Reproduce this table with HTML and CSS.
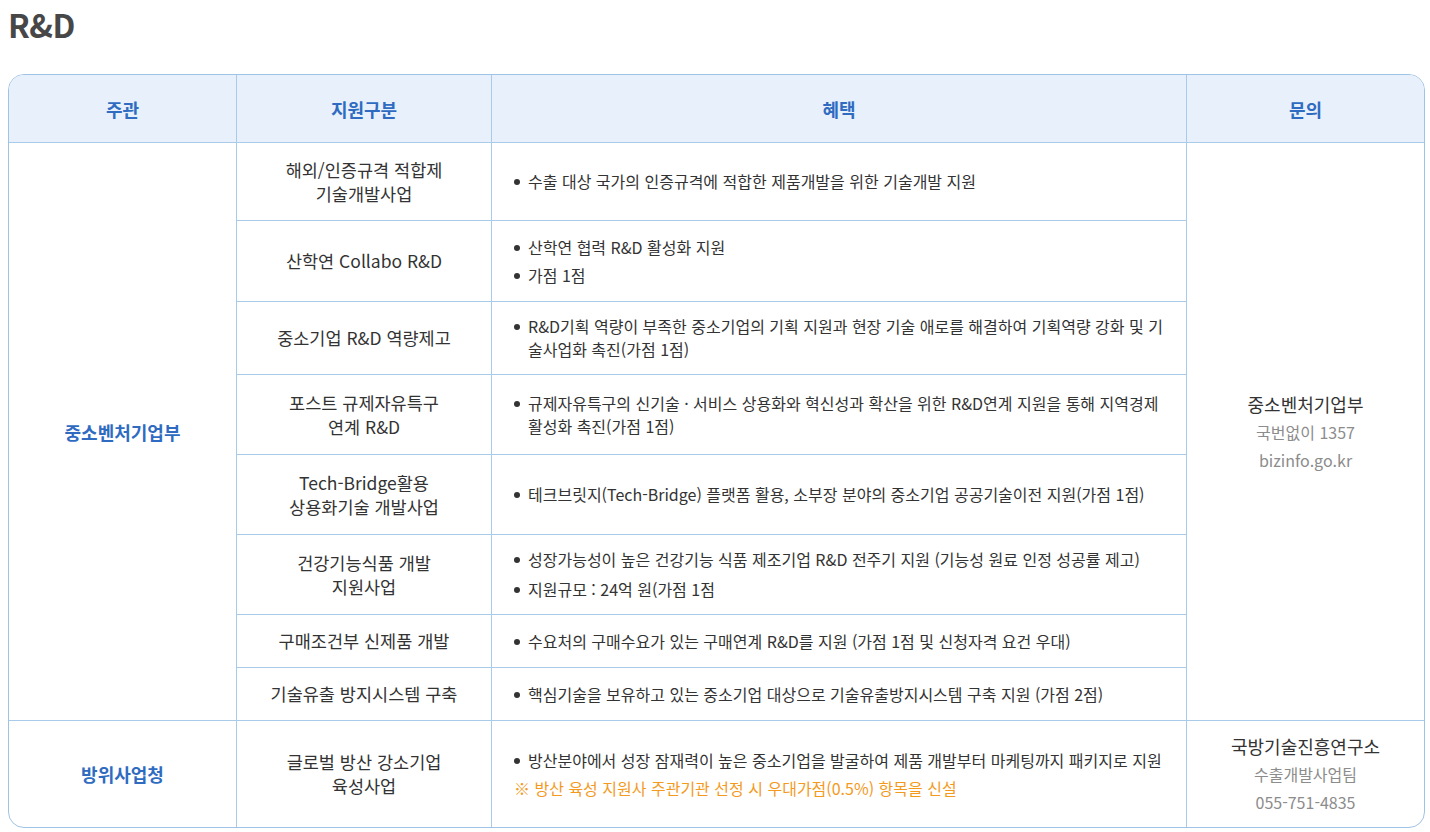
FILE: index.html
```html
<!DOCTYPE html>
<html lang="ko">
<head>
<meta charset="utf-8">
<title>R&amp;D</title>
<link rel="stylesheet" href="styles.css">
</head>
<body>
<h2 class="title">R&amp;D</h2>
<div class="table-wrap">
<table class="rd-table">
<colgroup>
<col class="c1"><col class="c2"><col class="c3"><col class="c4">
</colgroup>
<thead>
<tr class="h-head">
<th>주관</th><th>지원구분</th><th>혜택</th><th>문의</th>
</tr>
</thead>
<tbody>
<tr class="h78">
<td class="org" rowspan="8">중소벤처기업부</td>
<td class="kind">해외/인증규격 적합제<br>기술개발사업</td>
<td class="benefit"><ul><li>수출 대상 국가의 인증규격에 적합한 제품개발을 위한 기술개발 지원</li></ul></td>
<td class="contact" rowspan="8"><p class="c-name">중소벤처기업부</p><p class="c-sub">국번없이 1357</p><p class="c-sub">bizinfo.go.kr</p></td>
</tr>
<tr class="h81">
<td class="kind">산학연 Collabo R&amp;D</td>
<td class="benefit"><ul class="gap"><li>산학연 협력 R&amp;D 활성화 지원</li><li>가점 1점</li></ul></td>
</tr>
<tr class="h73">
<td class="kind">중소기업 R&amp;D 역량제고</td>
<td class="benefit"><ul><li>R&amp;D기획 역량이 부족한 중소기업의 기획 지원과 현장 기술 애로를 해결하여 기획역량 강화 및 기술사업화 촉진(가점 1점)</li></ul></td>
</tr>
<tr class="h80">
<td class="kind">포스트 규제자유특구<br>연계 R&amp;D</td>
<td class="benefit"><ul><li>규제자유특구의 신기술 · 서비스 상용화와 혁신성과 확산을 위한 R&amp;D연계 지원을 통해 지역경제 활성화 촉진(가점 1점)</li></ul></td>
</tr>
<tr class="h80">
<td class="kind">Tech-Bridge활용<br>상용화기술 개발사업</td>
<td class="benefit"><ul><li>테크브릿지(Tech-Bridge) 플랫폼 활용, 소부장 분야의 중소기업 공공기술이전 지원(가점 1점)</li></ul></td>
</tr>
<tr class="h80">
<td class="kind">건강기능식품 개발<br>지원사업</td>
<td class="benefit"><ul class="gap gap-lg"><li>성장가능성이 높은 건강기능 식품 제조기업 R&amp;D 전주기 지원 (기능성 원료 인정 성공률 제고)</li><li>지원규모 : 24억 원(가점 1점</li></ul></td>
</tr>
<tr class="h53">
<td class="kind">구매조건부 신제품 개발</td>
<td class="benefit"><ul><li>수요처의 구매수요가 있는 구매연계 R&amp;D를 지원 (가점 1점 및 신청자격 요건 우대)</li></ul></td>
</tr>
<tr class="h53">
<td class="kind">기술유출 방지시스템 구축</td>
<td class="benefit"><ul><li>핵심기술을 보유하고 있는 중소기업 대상으로 기술유출방지시스템 구축 지원 (가점 2점)</li></ul></td>
</tr>
<tr class="h107">
<td class="org">방위사업청</td>
<td class="kind">글로벌 방산 강소기업<br>육성사업</td>
<td class="benefit"><ul><li>방산분야에서 성장 잠재력이 높은 중소기업을 발굴하여 제품 개발부터 마케팅까지 패키지로 지원</li></ul><p class="note">※ 방산 육성 지원사 주관기관 선정 시 우대가점(0.5%) 항목을 신설</p></td>
<td class="contact"><p class="c-name">국방기술진흥연구소</p><p class="c-sub">수출개발사업팀</p><p class="c-sub">055-751-4835</p></td>
</tr>
</tbody>
</table>
</div>
</body>
</html>
```

FILE: styles.css
```css
* { box-sizing: border-box; }
html, body { margin: 0; padding: 0; background: #fff; }
body {
  padding: 0 5px 0 8px;
  font-family: "Noto Sans CJK KR", "Noto Sans", sans-serif;
  color: #333;
}
.title {
  margin: 0;
  height: 74px;
  padding-top: 4px;
  font-size: 32px;
  line-height: 40px;
  font-weight: 700;
  color: #474747;
  letter-spacing: -0.5px;
}
.table-wrap {
  border: 1px solid #9fc3e6;
  border-radius: 16px;
  overflow: hidden;
}
.rd-table {
  width: calc(100% + 2px);
  margin: -1px;
  border-collapse: collapse;
  table-layout: fixed;
}
.c1 { width: 228px; }
.c2 { width: 255px; }
.c3 { width: 695px; }
.rd-table th, .rd-table td {
  border: 1px solid #a9cbea;
  padding: 0 16px;
  vertical-align: middle;
}
.rd-table th {
  background: #e8f1fb;
  color: #2f6bc1;
  font-size: 18px;
  font-weight: 700;
  text-align: center;
}
.h-head { height: 68px; }
.h78 { height: 78px; }
.h81 { height: 81px; }
.h73 { height: 73px; }
.h80 { height: 80px; }
.h53 { height: 53px; }
.h107 { height: 107px; }
.org {
  text-align: center;
  color: #2f6bc1;
  font-size: 18px;
  font-weight: 700;
}
.kind {
  text-align: center;
  font-size: 17.5px;
  line-height: 24px;
  color: #333;
}
.rd-table td.benefit {
  font-size: 16px;
  line-height: 23px;
  color: #333;
  padding: 0 18px 0 22px;
}
.benefit ul {
  list-style: none;
  margin: 0;
  padding: 0;
}
.benefit li {
  position: relative;
  padding-left: 14px;
}
.benefit li::before {
  content: "";
  position: absolute;
  left: 0;
  top: 9px;
  width: 6px;
  height: 6px;
  border-radius: 50%;
  background: #333;
}
.benefit ul.gap li + li { margin-top: 5px; }
.benefit ul.gap-lg li + li { margin-top: 7px; }
.note {
  margin: 5px 0 0;
  color: #f39a1e;
}
.contact {
  text-align: center;
}
.contact p { margin: 0; }
.c-name {
  font-size: 18px;
  line-height: 28px;
  color: #333;
}
.c-sub {
  font-size: 16px;
  line-height: 28px;
  color: #8c8c8c;
}
```
